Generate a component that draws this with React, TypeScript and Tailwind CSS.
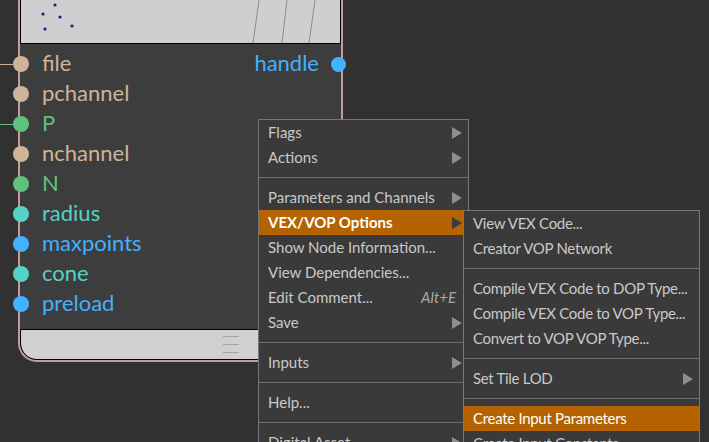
import React from "react";

type Port = { name: string; color: string; wire?: boolean };

const inputs: Port[] = [
  { name: "file", color: "#cfb498", wire: true },
  { name: "pchannel", color: "#cfb498" },
  { name: "P", color: "#5fc27b", wire: true },
  { name: "nchannel", color: "#cfb498" },
  { name: "N", color: "#5fc27b" },
  { name: "radius", color: "#54d3c5" },
  { name: "maxpoints", color: "#42b1ff" },
  { name: "cone", color: "#54d3c5" },
  { name: "preload", color: "#42b1ff" },
];

type Item =
  | { sep: true }
  | {
      sep?: false;
      label: string;
      sub?: boolean;
      hot?: boolean;
      bold?: boolean;
      shortcut?: string;
    };

const mainMenu: Item[] = [
  { label: "Flags", sub: true },
  { label: "Actions", sub: true },
  { sep: true },
  { label: "Parameters and Channels", sub: true },
  { label: "VEX/VOP Options", sub: true, hot: true, bold: true },
  { label: "Show Node Information..." },
  { label: "View Dependencies..." },
  { label: "Edit Comment...", shortcut: "Alt+E" },
  { label: "Save", sub: true },
  { sep: true },
  { label: "Inputs", sub: true },
  { sep: true },
  { label: "Help..." },
  { sep: true },
  { label: "Digital Asset", sub: true },
];

const vexMenu: Item[] = [
  { label: "View VEX Code..." },
  { label: "Creator VOP Network" },
  { sep: true },
  { label: "Compile VEX Code to DOP Type..." },
  { label: "Compile VEX Code to VOP Type..." },
  { label: "Convert to VOP VOP Type..." },
  { sep: true },
  { label: "Set Tile LOD", sub: true },
  { sep: true },
  { label: "Create Input Parameters", hot: true },
  { label: "Create Input Constants" },
];

function Arrow({ dark }: { dark?: boolean }) {
  return (
    <svg width="10" height="12" viewBox="0 0 10 12" className="shrink-0">
      <polygon points="0,0 10,6 0,12" fill={dark ? "#3a3a3a" : "#8e8e8e"} />
    </svg>
  );
}

function MenuRows({ items }: { items: Item[] }) {
  return (
    <>
      {items.map((it, i) =>
        it.sep ? (
          <div key={i} className="flex h-[15px] items-center">
            <div className="h-px w-full bg-[#6f6f6f]" />
          </div>
        ) : (
          <div
            key={i}
            className={
              "flex h-[25px] items-center whitespace-nowrap pl-[9px] pr-[6px] " +
              (it.hot ? "bg-[#b46300] text-white" : "text-[#c9c9c9]")
            }
          >
            <span className={it.bold ? "font-bold" : ""}>{it.label}</span>
            <span className="ml-auto flex items-center">
              {it.shortcut && (
                <span className="mr-[6px] italic text-[#a9a9a9]">{it.shortcut}</span>
              )}
              {it.sub && <Arrow dark={it.hot} />}
            </span>
          </div>
        )
      )}
    </>
  );
}

function PreviewArt() {
  const dots = [
    [55, 5],
    [43, 14],
    [60, 17],
    [72, 26],
    [45, 29],
  ];
  const lines = [
    [253, 259],
    [282, 287],
    [309, 315],
  ];
  return (
    <svg width="320" height="43" viewBox="21 0 320 43" className="block">
      {dots.map(([x, y], i) => (
        <circle key={i} cx={x} cy={y} r="1.6" fill="#1c1f7c" />
      ))}
      {lines.map(([b, t], i) => (
        <line key={i} x1={b} y1="43" x2={t} y2="0" stroke="#8a8a8a" strokeWidth="1" />
      ))}
    </svg>
  );
}

function NodeTile() {
  return (
    <div className="ml-[18px] w-[325px] rounded-bl-[19px] border-x-2 border-b-2 border-[#c79c9c]">
      <div className="h-[44px] overflow-hidden border-x border-b border-black bg-[#cfcfcf]">
        <PreviewArt />
      </div>

      <div className="h-[285px] bg-[#3d3d3d] pt-[5px]">
        {inputs.map((p, i) => (
          <div key={p.name} className="flex h-[30px] items-center">
            <span
              className="relative -ml-[7px] size-[16px] shrink-0 rounded-full"
              style={{ backgroundColor: p.color }}
            >
              {p.wire && (
                <span
                  className="absolute right-full top-1/2 h-px w-[13px]"
                  style={{ backgroundColor: p.color }}
                />
              )}
            </span>
            <span
              className="ml-[13px] -mt-[2px] text-[22px] leading-none"
              style={{ color: p.color }}
            >
              {p.name}
            </span>
            {i === 0 && (
              <>
                <span className="ml-auto -mt-[2px] text-[22px] leading-none text-[#42b1ff]">
                  handle
                </span>
                <span className="ml-[12px] -mr-[5px] size-[15px] shrink-0 rounded-full bg-[#42b1ff]" />
              </>
            )}
          </div>
        ))}
      </div>

      <div className="flex h-[31px] flex-col justify-center gap-[7px] rounded-bl-[17px] border border-black bg-[#d0d0d0] pl-[202px]">
        <div className="h-px w-[16px] bg-[#a3a3a3]" />
        <div className="h-px w-[16px] bg-[#a3a3a3]" />
        <div className="h-px w-[16px] bg-[#a3a3a3]" />
      </div>
    </div>
  );
}

export default function App() {
  return (
    <div className="relative h-[442px] w-[709px] overflow-hidden bg-[#313131] font-['Lato',sans-serif]">
      <NodeTile />

      <div className="absolute left-[258px] top-[119px] w-[211px] border border-[#777777] bg-[#3a3a3a] text-[15px]">
        <MenuRows items={mainMenu} />
      </div>

      <div className="absolute left-[463px] top-[210px] w-[237px] border border-[#777777] bg-[#3a3a3a] text-[15px] tracking-[-0.3px]">
        <MenuRows items={vexMenu} />
      </div>
    </div>
  );
}
